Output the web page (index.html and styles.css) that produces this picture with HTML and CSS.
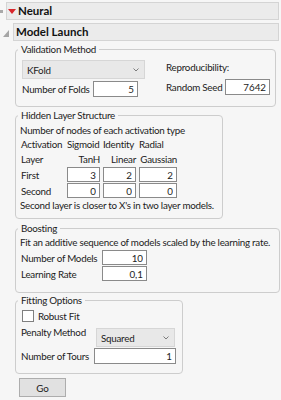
FILE: index.html
```html
<!DOCTYPE html>
<html lang="en">

<head>
    <meta charset="UTF-8">
    <meta name="viewport" content="width=device-width, initial-scale=1.0">
    <title>Neural</title>
    <link rel="stylesheet" href="styles.css">
</head>

<body>
    <div class="report">
        <div class="outline-row top">
            <span class="grip"></span>
            <div class="outline-bar">
                <span class="hotspot">
                    <svg width="8" height="5" viewBox="0 0 8 5"><polygon points="0,0 8,0 4,5" fill="#d9262c"/></svg>
                </span>
                <span class="outline-title">Neural</span>
            </div>
        </div>
        <div class="outline-row sub">
            <svg class="disclosure" width="6" height="7" viewBox="0 0 6 7"><polygon points="6,0 6,7 0,7" fill="#a6a6a6"/></svg>
            <div class="outline-bar">
                <span class="outline-title">Model Launch</span>
            </div>
        </div>

        <main class="launch">
            <fieldset class="group validation">
                <legend>Validation Method</legend>
                <div class="validation-cols">
                    <div class="col method">
                        <div class="combo kfold">
                            <span>KFold</span>
                            <svg class="chevron" width="6" height="4" viewBox="0 0 6 4"><polyline points="0.5,0.5 3,3 5.5,0.5" fill="none" stroke="#7c7c7c" stroke-width="1"/></svg>
                        </div>
                        <div class="field folds">
                            <label>Number of Folds</label>
                            <input class="num" type="text" value="5">
                        </div>
                    </div>
                    <div class="col seed">
                        <div class="caption">Reproducibility:</div>
                        <div class="field">
                            <label>Random Seed</label>
                            <input class="num" type="text" value="7642">
                        </div>
                    </div>
                </div>
            </fieldset>

            <fieldset class="group hidden-layer">
                <legend>Hidden Layer Structure</legend>
                <div class="caption">Number of nodes of each activation type</div>
                <div class="node-grid">
                    <span>Activation</span>
                    <span>Sigmoid</span>
                    <span>Identity</span>
                    <span>Radial</span>

                    <span>Layer</span>
                    <span class="right">TanH</span>
                    <span class="right">Linear</span>
                    <span class="right">Gaussian</span>

                    <span>First</span>
                    <input class="num" type="text" value="3">
                    <input class="num" type="text" value="2">
                    <input class="num" type="text" value="2">

                    <span>Second</span>
                    <input class="num" type="text" value="0">
                    <input class="num" type="text" value="0">
                    <input class="num" type="text" value="0">
                </div>
                <div class="caption">Second layer is closer to X's in two layer models.</div>
            </fieldset>

            <fieldset class="group boosting">
                <legend>Boosting</legend>
                <div class="caption">Fit an additive sequence of models scaled by the learning rate.</div>
                <div class="field models">
                    <label>Number of Models</label>
                    <input class="num" type="text" value="10">
                </div>
                <div class="field rate">
                    <label>Learning Rate</label>
                    <input class="num" type="text" value="0,1">
                </div>
            </fieldset>

            <fieldset class="group fitting">
                <legend>Fitting Options</legend>
                <div class="check-row">
                    <span class="checkbox"></span>
                    <span>Robust Fit</span>
                </div>
                <div class="field penalty">
                    <label>Penalty Method</label>
                    <div class="combo squared">
                        <span>Squared</span>
                        <svg class="chevron" width="6" height="4" viewBox="0 0 6 4"><polyline points="0.5,0.5 3,3 5.5,0.5" fill="none" stroke="#7c7c7c" stroke-width="1"/></svg>
                    </div>
                </div>
                <div class="field tours">
                    <label>Number of Tours</label>
                    <input class="num" type="text" value="1">
                </div>
            </fieldset>

            <button class="go-btn">Go</button>
        </main>
    </div>
</body>

</html>
```

FILE: styles.css
```css
/* --- base --- */
:root {
    --page-bg: #f6f6f6;
    --bar-bg: #ebebeb;
    --bar-border: #d4d4d4;
    --group-border: #cdcdcd;
    --input-border: #8a8a8a;
    --text-color: #1c1c1c;
    --font-family: 'Lato', 'Liberation Sans', sans-serif;
}

body {
    margin: 0;
    background-color: var(--page-bg);
    color: var(--text-color);
    font-family: var(--font-family);
    font-size: 9.8px;
    letter-spacing: -0.25px;
    line-height: 14px;
}

/* --- outline headers --- */
.outline-row {
    display: flex;
    align-items: center;
    height: 18px;
    margin-right: 2px;
}

.outline-row.top {
    margin-top: 2px;
}

.outline-row.sub {
    margin-top: 3px;
}

.grip {
    width: 3px;
    height: 3px;
    background-color: #a9a9a9;
    margin-right: 3px;
}

.disclosure {
    margin-left: 3px;
    margin-right: 4px;
    margin-top: 2px;
}

.outline-bar {
    flex: 1;
    height: 18px;
    box-sizing: border-box;
    display: flex;
    align-items: center;
    padding-left: 2px;
    background-color: var(--bar-bg);
    border: 1px solid var(--bar-border);
}

.top .outline-bar {
    padding-left: 1px;
}

.hotspot {
    display: flex;
    margin-right: 2px;
}

.outline-title {
    font-size: 11.5px;
    font-weight: 700;
    letter-spacing: 0;
    color: #111;
}

/* --- launch groups --- */
.launch {
    padding-left: 15px;
}

.group {
    margin: 0;
    padding: 0 2px 0 4px;
    border: 1px solid var(--group-border);
    border-radius: 4px;
    box-sizing: border-box;
    min-width: 0;
}

.group legend {
    padding: 0 3px;
    margin-left: -2px;
    line-height: 14px;
    color: #222;
}

.caption {
    white-space: nowrap;
}

.field {
    display: flex;
    align-items: center;
}

.field label {
    flex-shrink: 0;
    white-space: nowrap;
}

.num {
    box-sizing: border-box;
    height: 16px;
    margin: 0;
    padding: 0 3px 0 2px;
    border: 1px solid var(--input-border);
    border-radius: 0;
    background: #fff;
    font-family: var(--font-family);
    font-size: 9.8px;
    color: var(--text-color);
    text-align: right;
    outline: none;
}

.combo {
    box-sizing: border-box;
    height: 19px;
    display: flex;
    align-items: center;
    justify-content: space-between;
    padding: 0 5px 0 4px;
    background-color: #e8e8e8;
    border: 1px solid #d6d6d6;
}

.chevron {
    margin-top: 1px;
}

/* validation */
.validation {
    width: 261px;
    margin-top: 1px;
    padding-top: 4px;
    padding-bottom: 9px;
}

.validation-cols {
    display: flex;
}

.method {
    width: 123px;
    margin-left: 2px;
}

.folds {
    margin-top: 2px;
}

.folds label {
    width: 71px;
}

.folds .num,
.seed .num {
    width: 45px;
}

.seed {
    margin-left: 21px;
}

.seed .field {
    margin-top: 5px;
}

.seed label {
    width: 59px;
}

/* hidden layer */
.hidden-layer {
    width: 208px;
    margin-top: 1px;
    padding-top: 1px;
    padding-bottom: 6px;
}

.node-grid {
    display: grid;
    grid-template-columns: 43px 33px 33px 38px;
    grid-template-rows: 14px 14px 15px 15px;
    column-gap: 3px;
    row-gap: 1px;
    align-items: center;
    margin-left: 1px;
}

.node-grid .right {
    text-align: right;
}

.node-grid .num {
    width: 100%;
    height: 15px;
}

/* boosting */
.boosting {
    width: 265px;
    margin-top: 2px;
    padding-bottom: 11px;
}

.boosting .field {
    margin-left: 1px;
    margin-top: 1px;
}

.boosting label {
    width: 81px;
}

.boosting .num {
    width: 45px;
    height: 15px;
}

/* fitting options */
.fitting {
    width: 168px;
    padding-top: 2px;
    padding-bottom: 9px;
}

.check-row {
    display: flex;
    align-items: center;
    gap: 4px;
    margin-left: 2px;
}

.checkbox {
    width: 12px;
    height: 12px;
    box-sizing: border-box;
    border: 1px solid #7f7f7f;
    background: #fff;
}

.penalty {
    align-items: flex-start;
    margin-left: 1px;
    margin-top: 2px;
}

.penalty label {
    width: 75px;
}

.squared {
    width: 79px;
    margin-top: 3px;
}

.tours {
    margin-left: 1px;
    margin-top: 1px;
}

.tours label {
    width: 73px;
}

.tours .num {
    width: 82px;
}

.go-btn {
    display: block;
    width: 47px;
    height: 19px;
    margin: 4px 0 0 4px;
    padding: 0;
    background-color: #e1e1e1;
    border: 1px solid #adadad;
    border-radius: 0;
    font-family: var(--font-family);
    font-size: 9.8px;
    color: var(--text-color);
}
```
